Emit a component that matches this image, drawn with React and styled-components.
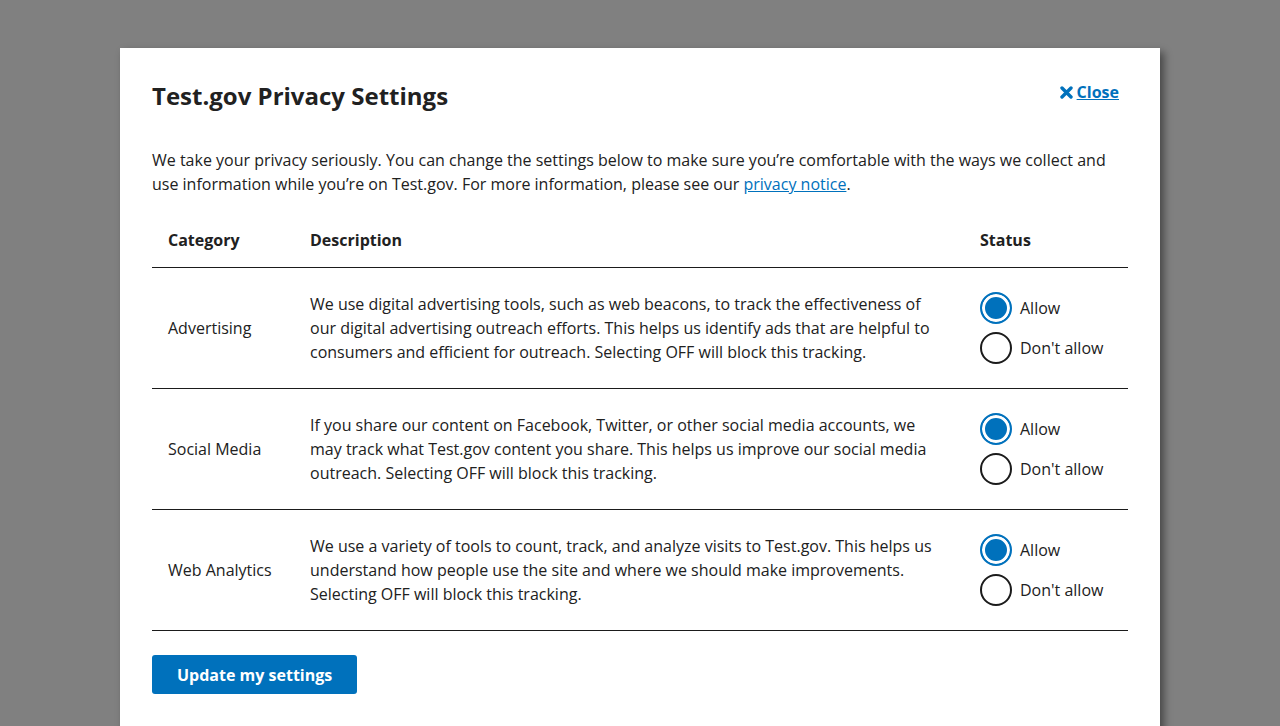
import React, { useState } from 'react';
import styled, { createGlobalStyle } from 'styled-components';

const GlobalStyle = createGlobalStyle`
  html, body {
    margin: 0;
    padding: 0;
    background: #808080;
    font-family: "Open Sans", "Liberation Sans", sans-serif;
    color: #1b1b1b;
  }
  #root {
    height: 726px;
    overflow: hidden;
  }
`;

const rows = [
  {
    id: 'advertising',
    category: 'Advertising',
    description:
      'We use digital advertising tools, such as web beacons, to track the effectiveness of our digital advertising outreach efforts. This helps us identify ads that are helpful to consumers and efficient for outreach. Selecting OFF will block this tracking.',
  },
  {
    id: 'social',
    category: 'Social Media',
    description:
      'If you share our content on Facebook, Twitter, or other social media accounts, we may track what Test.gov content you share. This helps us improve our social media outreach. Selecting OFF will block this tracking.',
  },
  {
    id: 'analytics',
    category: 'Web Analytics',
    description:
      'We use a variety of tools to count, track, and analyze visits to Test.gov. This helps us understand how people use the site and where we should make improvements. Selecting OFF will block this tracking.',
  },
];

const CloseIcon = () => (
  <svg width="13" height="13" viewBox="0 0 13 13" aria-hidden="true">
    <path
      d="M2 2 L11 11 M11 2 L2 11"
      stroke="currentColor"
      strokeWidth="3.4"
      strokeLinecap="round"
      fill="none"
    />
  </svg>
);

const App = () => {
  const [settings, setSettings] = useState({
    advertising: true,
    social: true,
    analytics: true,
  });

  const choose = (id, value) => setSettings({ ...settings, [id]: value });

  return (
    <>
      <GlobalStyle />
      <Overlay>
        <Modal>
          <Header>
            <Title>Test.gov Privacy Settings</Title>
            <CloseLink href="#">
              <CloseIcon />
              Close
            </CloseLink>
          </Header>
          <Intro>
            We take your privacy seriously. You can change the settings below to make sure
            you’re comfortable with the ways we collect and use information while you’re on
            Test.gov. For more information, please see our <Link href="#">privacy notice</Link>.
          </Intro>
          <Table>
            <colgroup>
              <Col $width="142px" />
              <Col />
              <Col $width="164px" />
            </colgroup>
            <thead>
              <tr>
                <Th>Category</Th>
                <Th>Description</Th>
                <Th>Status</Th>
              </tr>
            </thead>
            <tbody>
              {rows.map((row) => (
                <tr key={row.id}>
                  <Td>{row.category}</Td>
                  <Td>{row.description}</Td>
                  <Td>
                    <Radios>
                      <RadioLabel>
                        <RadioInput
                          type="radio"
                          name={row.id}
                          checked={settings[row.id]}
                          onChange={() => choose(row.id, true)}
                        />
                        <RadioMark $checked={settings[row.id]} />
                        Allow
                      </RadioLabel>
                      <RadioLabel>
                        <RadioInput
                          type="radio"
                          name={row.id}
                          checked={!settings[row.id]}
                          onChange={() => choose(row.id, false)}
                        />
                        <RadioMark $checked={!settings[row.id]} />
                        Don't allow
                      </RadioLabel>
                    </Radios>
                  </Td>
                </tr>
              ))}
            </tbody>
          </Table>
          <Button type="button">Update my settings</Button>
        </Modal>
      </Overlay>
    </>
  );
};

const Overlay = styled.div`
  padding: 48px 120px 0;
`;

const Modal = styled.div`
  background: #fff;
  padding: 32px 32px 40px;
  box-shadow: 4px 4px 8px rgba(0, 0, 0, 0.45);
`;

const Header = styled.div`
  display: flex;
  justify-content: space-between;
  align-items: flex-start;
  padding-right: 9px;
`;

const Title = styled.h1`
  margin: 0;
  font-size: 24px;
  line-height: 32px;
  font-weight: 700;
  color: #212121;
`;

const CloseLink = styled.a`
  display: inline-flex;
  align-items: center;
  gap: 4px;
  color: #0071bc;
  font-size: 16px;
  font-weight: 700;
  line-height: 24px;
  text-decoration: underline;
`;

const Intro = styled.p`
  margin: 36px 0 16px;
  font-size: 16px;
  line-height: 24px;
  color: #212121;
`;

const Link = styled.a`
  color: #0071bc;
  text-decoration: underline;
`;

const Table = styled.table`
  width: 100%;
  border-collapse: collapse;
  table-layout: fixed;
  font-size: 16px;
  line-height: 24px;
  color: #212121;
`;

const Col = styled.col`
  width: ${(p) => p.$width || 'auto'};
`;

const Th = styled.th`
  text-align: left;
  font-weight: 700;
  padding: 16px 16px 15px;
  border-bottom: 1px solid #1b1b1b;
`;

const Td = styled.td`
  vertical-align: middle;
  padding: 24px 16px;
  border-bottom: 1px solid #1b1b1b;
`;

const Radios = styled.div`
  display: flex;
  flex-direction: column;
  gap: 8px;
`;

const RadioLabel = styled.label`
  display: flex;
  align-items: center;
  gap: 8px;
  height: 32px;
  cursor: pointer;
  white-space: nowrap;
`;

const RadioInput = styled.input`
  position: absolute;
  opacity: 0;
  width: 0;
  height: 0;
`;

const RadioMark = styled.span`
  box-sizing: border-box;
  flex: none;
  width: 32px;
  height: 32px;
  border-radius: 50%;
  border: 2px solid ${(p) => (p.$checked ? '#0071bc' : '#1b1b1b')};
  background: ${(p) => (p.$checked ? '#0071bc' : '#fff')};
  box-shadow: ${(p) => (p.$checked ? 'inset 0 0 0 3px #fff' : 'none')};
`;

const Button = styled.button`
  margin-top: 24px;
  padding: 0 25px;
  height: 39px;
  border: 0;
  border-radius: 3px;
  background: #0071bc;
  color: #fff;
  font-family: "Open Sans", "Liberation Sans", sans-serif;
  font-size: 16px;
  font-weight: 700;
  cursor: pointer;
`;

export default App;
